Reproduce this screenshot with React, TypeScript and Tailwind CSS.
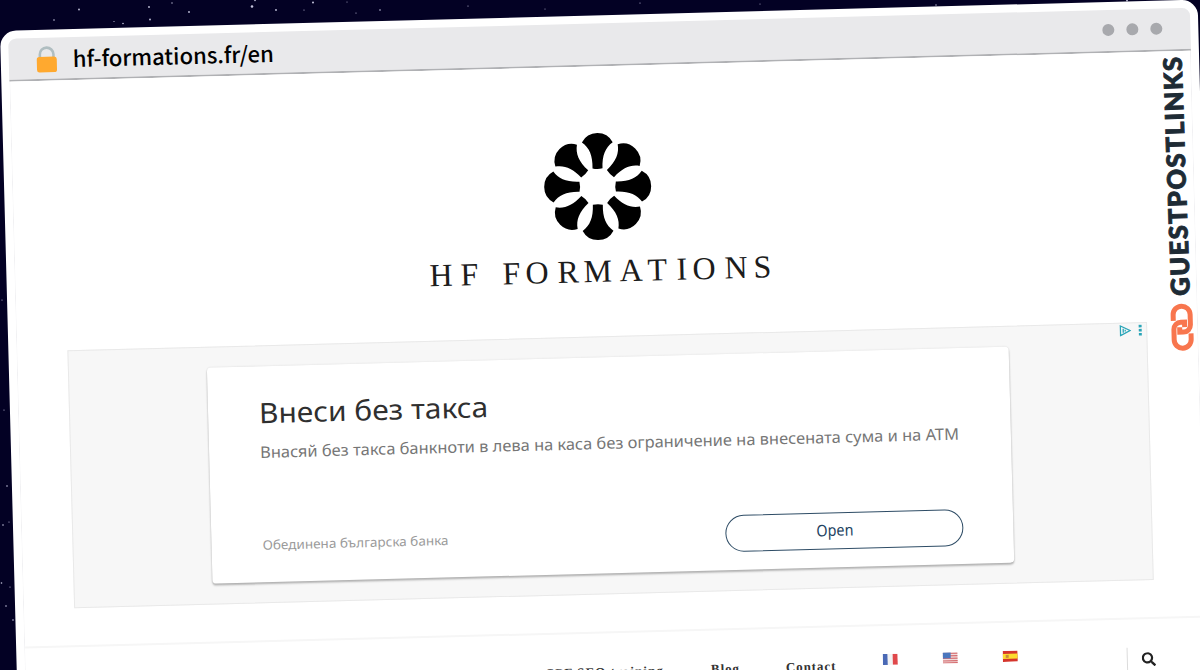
import type { ReactNode } from 'react';
import { FaSearch } from 'react-icons/fa';

const STARS: [number, number, number][] = [
  [79, 9.5, 0.9], [149, 7, 0.9], [54, 20, 0.8], [114, 21.5, 0.6], [123, 23.5, 0.8], [150, 19.5, 0.9],
  [172, 3, 0.7], [189, 12, 0.9], [252, 6.5, 1.3], [255, 0.5, 0.8], [276, 10, 0.9], [304, 10, 0.6],
  [313, 2.5, 1], [347, 2, 0.5], [356, 13, 0.6], [380, 10, 0.8], [468, 6, 0.6], [545, 9, 0.5],
  [640, 3, 0.6], [760, 4, 0.5], [936, 5, 0.7], [1127, 0.5, 0.9], [2, 300, 0.6], [4, 410, 0.6],
  [7, 486, 0.8], [3, 525, 0.8], [9, 522, 0.6], [1.5, 583, 0.8], [10, 587, 0.6], [6, 606, 0.8], [13, 620, 0.8],
];

const PETALS = [0, 45, 90, 135, 180, 225, 270, 315];

const LETTERS = 'HFFORMATIONS';
const LETTER_X = [7, 38, 80, 103, 135, 161, 197, 225, 254, 270, 302, 331];

export default function App() {
  return (
    <div className="relative h-[670px] w-[1200px] overflow-hidden bg-[#030124]">
      <Stars />
      <div className="absolute left-0 top-[31.4px] h-[720px] w-[1198px] origin-top-left -rotate-[1.5deg] rounded-[16px] bg-white p-2">
        <div className="flex h-full flex-col rounded-t-[8px] border-l border-r border-[#f1f1f3]">
          <AddressBar />
          <Page />
        </div>
        <Watermark />
      </div>
    </div>
  );
}

function Stars() {
  return (
    <svg className="absolute inset-0" width="1200" height="670">
      {STARS.map(([x, y, r]) => (
        <circle key={`${x}-${y}`} cx={x} cy={y} r={r} fill="#c4c4dc" />
      ))}
    </svg>
  );
}

function AddressBar() {
  return (
    <header className="-mx-px flex h-[43px] shrink-0 items-center rounded-t-[8px] border-b-2 border-[#b0b1b4] bg-[#e9e9eb] pb-px pl-[27px] pr-[28px]">
      <svg width="22" height="28" viewBox="0 0 22 28" className="mt-[3px]">
        <path d="M4.2 12V8.600a6.800 6.800 0 0 1 13.600 0V12" fill="none" stroke="#b0bec1" strokeWidth="2.6" />
        <rect x="1" y="11" width="20" height="15.5" rx="2.6" fill="#ffa92f" />
      </svg>
      <span className="ml-[15px] whitespace-nowrap font-['Noto_Sans_CJK_SC',sans-serif] text-[22px] font-medium leading-none text-black">
        hf-formations.fr/en
      </span>
      <div className="ml-auto flex gap-3">
        <span className="size-3 rounded-full bg-[#a8a9ad]" />
        <span className="size-3 rounded-full bg-[#a8a9ad]" />
        <span className="size-3 rounded-full bg-[#a8a9ad]" />
      </div>
    </header>
  );
}

function Page() {
  return (
    <main className="flex flex-1 flex-col bg-white">
      <div className="flex h-[270px] pl-[407px] pt-[61px]">
        <Logo />
      </div>
      <AdBanner />
      <div className="mt-[37px] border-t-2 border-[#f6f6f6]">
        <Nav />
      </div>
    </main>
  );
}

function Logo() {
  return (
    <svg width="366" height="180" viewBox="0 0 366 180">
      <g transform="translate(177.4 59.2)">
        {PETALS.map((a) => (
          <path
            key={a}
            transform={`rotate(${a + 1})`}
            d="M-15.4 -44.2 A17.4 17.4 0 0 1 15.4 -44.2 C8 -39 4.6 -31 5 -18.2 Q0 -17 -5 -18.2 C-4.6 -31 -8 -39 -15.4 -44.2Z"
            fill="#000"
          />
        ))}
      </g>
      <text x={LETTER_X.join(' ')} y="154.500" fontFamily="'Liberation Serif', serif" fontSize="32" fill="#1c1c1c">
        {LETTERS}
      </text>
    </svg>
  );
}

function AdBanner() {
  return (
    <section className="relative ml-[50px] h-[258px] w-[1080px] border border-[#e9e9e9] bg-[#f7f7f7] pl-[138px] pt-[20px] font-['Noto_Sans',sans-serif]">
      <div className="absolute right-1 top-px flex items-center gap-[7px]">
        <svg width="12" height="12" viewBox="0 0 12 12" fill="none" stroke="#2aa5b8" strokeWidth="1.3">
          <path d="M1.2 1.2v9.6L10.8 6Z" />
          <path d="M4 4v4M6 5.2v1.6" />
        </svg>
        <svg width="4" height="12" viewBox="0 0 4 12" fill="#2aa5b8">
          <rect x=".5" y=".5" width="3" height="2.6" />
          <rect x=".5" y="4.6" width="3" height="2.6" />
          <rect x=".5" y="8.7" width="3" height="2.6" />
        </svg>
      </div>
      <div className="flex h-[216px] w-[802px] flex-col rounded-[4px] bg-white pb-[18px] pl-[51px] pr-[50px] pt-[28px] shadow-[0_2px_2px_rgba(0,0,0,0.26),0_0_2px_rgba(0,0,0,0.12)]">
        <Fit width={229} height={38} size={28} color="#2f2f2f">Внеси без такса</Fit>
        <div className="mt-[5px]">
          <Fit width={699} height={30} size={16} color="#767676">
            Внасяй без такса банкноти в лева на каса без ограничение на внесената сума и на ATM
          </Fit>
        </div>
        <div className="mt-auto flex items-center justify-between">
          <div className="pb-0.5">
            <Fit width={186} height={20} size={13} color="#9a9a9a">Обединена българска банка</Fit>
          </div>
          <button type="button" className="flex h-[37px] w-[238px] items-center justify-center rounded-full border border-[#2f4d66] pb-0.5 pr-5">
            <Fit width={37} height={24} size={16} color="#23425f">Open</Fit>
          </button>
        </div>
      </div>
    </section>
  );
}

// One line of text set to an exact measure
function Fit({ width, height, size, color, children }: { width: number; height: number; size: number; color: string; children: ReactNode }) {
  return (
    <svg width={width} height={height} className="block overflow-visible">
      <text x="0" y={height / 2 + size * 0.35} fontSize={size} fill={color} textLength={width} lengthAdjust="spacingAndGlyphs">
        {children}
      </text>
    </svg>
  );
}

function Nav() {
  return (
    <nav className="flex h-[70px] items-start pl-[519px] font-['Liberation_Serif',serif] text-[13px] font-bold leading-[15px] tracking-[0.9px] text-[#333]">
      <span className="mt-[31px] w-[166px] whitespace-nowrap tracking-[1.05px]">CPF SEO training</span>
      <span className="mt-[31px] w-[75px]">Blog</span>
      <span className="mt-[31px] w-[97px]">Contact</span>
      <div className="mt-[28px] flex gap-[45px]">
        <Flag>
          <rect width="5" height="11" fill="#4a69b5" />
          <rect x="5" width="5" height="11" fill="#f3f3f3" />
          <rect x="10" width="5" height="11" fill="#e0484b" />
        </Flag>
        <Flag>
          <rect width="15" height="11" fill="#f0dcdc" />
          <path d="M0 1h15M0 3.5h15M0 6h15M0 8.5h15M0 10.5h15" stroke="#d56a6d" strokeWidth="1.1" />
          <rect width="8" height="6" fill="#4b76bd" />
        </Flag>
        <Flag>
          <rect width="15" height="11" fill="#d5352c" />
          <rect y="3" width="15" height="5" fill="#fddb2f" />
          <rect x="3" y="4" width="3" height="3" fill="#c98b3c" />
        </Flag>
      </div>
      <span className="ml-[109px] mt-[28px] h-10 w-px bg-[#dcdcdc]" />
      <FaSearch className="ml-[14px] mt-[33px] size-[14px] text-[#222]" />
    </nav>
  );
}

function Flag({ children }: { children: ReactNode }) {
  return (
    <svg width="15" height="11" viewBox="0 0 15 11">
      {children}
    </svg>
  );
}

function Watermark() {
  return (
    <div className="absolute right-[11px] top-[56px] flex w-[26px] flex-col items-center">
      <svg width="26" height="242">
        <text
          transform="translate(21.5 239.5) rotate(-90.5)"
          fontFamily="Lato, sans-serif"
          fontWeight="900"
          fontSize="25.5"
          textLength="239"
          lengthAdjust="spacing"
          fill="#1e2b35"
          stroke="#1e2b35"
          strokeWidth="0.9"
        >
          GUESTPOSTLINKS
        </text>
      </svg>
      <svg width="24" height="48" viewBox="0 0 24 48" className="mt-[5px]" fill="none" stroke="#f8764e" strokeWidth="5">
        <path d="M3.3 17.5V11.500a8.500 8.500 0 0 1 17 0V22a7 7 0 0 1-7 7H9.500v-5" />
        <path d="M20.700 30.500v6a8.500 8.500 0 0 1-17 0V26a7 7 0 0 1 7-7H14.500v5" />
      </svg>
    </div>
  );
}
